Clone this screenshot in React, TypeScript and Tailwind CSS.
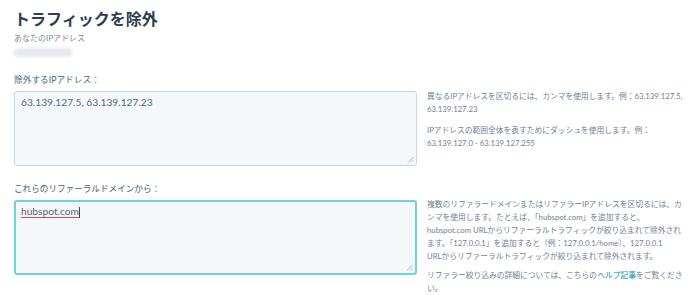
import React from 'react';

const font = { fontFamily: 'Lato, "Noto Sans CJK JP", sans-serif' };

function Grip() {
    return (
        <svg width="7" height="7" viewBox="0 0 7 7" className="absolute bottom-[2px] right-[2px]">
            <path d="M6.5 1 L1 6.5 M6.5 4 L4 6.5" stroke="#9aa7b4" strokeWidth="0.8" />
        </svg>
    );
}

export default function App() {
    return (
        <div className="w-[688px] h-[295px] bg-white overflow-hidden pl-[14px] pt-[8px] text-[#33475b]" style={font}>
            <h2 className="text-[16px] leading-[22px] font-bold text-[#2d3e50]">トラフィックを除外</h2>
            <div className="mt-[2px] text-[8px] leading-[12px] text-[#7c8a98]">あなたのIPアドレス</div>
            <div className="mt-[4px] w-[58px] h-[9px] rounded-sm bg-[#e7e9ec] blur-[1.5px]" />

            <div className="mt-[17px] text-[8.7px] leading-[12px] text-[#4a5d71]">除外するIPアドレス：</div>
            <div className="mt-[5px] flex gap-[10px]">
                <div className="relative w-[403px] h-[75px] shrink-0 rounded-[3px] border border-[#cbd6e2] bg-[#f5f8fa] px-[6px] pt-[3px] text-[10.2px] leading-[14px] text-[#53677c]">
                    63.139.127.5, 63.139.127.23
                    <Grip />
                </div>
                <div className="-mt-[1.5px] w-[260px] text-[7.75px] leading-[13px] text-[#6f8193]">
                    <p>異なるIPアドレスを区切るには、カンマを使用します。例：63.139.127.5, 63.139.127.23</p>
                    <p className="mt-[8px]">IPアドレスの範囲全体を表すためにダッシュを使用します。例：63.139.127.0 - 63.139.127.255</p>
                </div>
            </div>

            <div className="mt-[17px] text-[8.6px] leading-[12px] text-[#4a5d71]">これらのリファーラルドメインから：</div>
            <div className="mt-[5px] flex gap-[10px]">
                <div className="relative w-[403px] h-[75px] shrink-0 rounded-[3px] border-2 border-[#6fd3de] bg-[#f5f8fa] px-[5px] pt-[2px] text-[10.2px] leading-[14px] text-[#53677c]">
                    <span className="underline decoration-[#e04848] decoration-[0.8px] underline-offset-[2px]">hubspot.com</span>
                    <span className="inline-block w-px h-[11px] bg-[#33475b] align-middle" />
                    <Grip />
                </div>
                <div className="-mt-[2.5px] w-[260px] text-[7.75px] leading-[13px] text-[#6f8193]">
                    <p>
                        複数のリファラードメインまたはリファラーIPアドレスを区切るには、カンマを使用します。たとえば、「hubspot.com」を追加すると、hubspot.com URLからリファーラルトラフィックが絞り込まれて除外されます。「127.0.0.1」を追加すると（例：127.0.0.1/home）、127.0.0.1
                        <br />
                        URLからリファーラルトラフィックが絞り込まれて除外されます。
                    </p>
                    <p className="mt-[6px]">リファラー絞り込みの詳細については、こちらの<span className="text-[#0091ae]">ヘルプ記事</span>をご覧ください。</p>
                </div>
            </div>
        </div>
    );
}
